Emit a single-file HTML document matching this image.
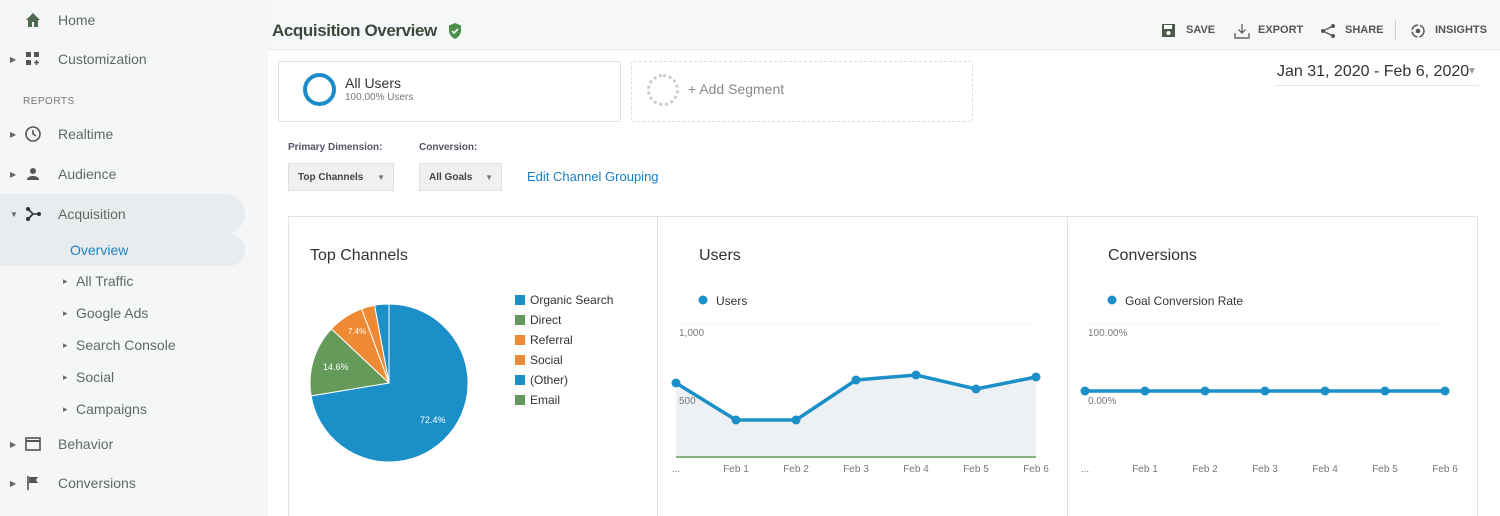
<!DOCTYPE html>
<html><head><meta charset="utf-8"><style>
*{margin:0;padding:0;box-sizing:border-box}
body{width:1500px;height:516px;overflow:hidden;background:#fff;font-family:"Liberation Sans",sans-serif;position:relative;color:#333}
.side{position:absolute;left:0;top:0;width:268px;height:516px;background:#f5f6f7}
.it{position:absolute;left:0;height:40px;display:flex;align-items:center;font-size:14px;color:#5f6b5f;width:245px}
.it .ar{position:absolute;left:10px;font-size:8px;color:#666}
.it .ic{position:absolute;left:24px;width:18px;height:18px}
.it .tx{position:absolute;left:58px}
.sub{position:absolute;left:76px;font-size:14px;color:#5f6b5f}
.sub:before{content:"▸";font-size:9px;position:absolute;left:-13px;top:3px;color:#666}
.abs{position:absolute}
.hdr{position:absolute;left:268px;top:0;width:1232px;height:50px;background:#f6f7f8;border-bottom:1px solid #e8eaeb}
.tb{position:absolute;top:24px;font-size:11px;font-weight:bold;color:#555}
.card{position:absolute;top:216px;height:300px;border:1px solid #e3e3e3;border-bottom:none}
.ttl{position:absolute;top:30px;font-size:16px;color:#333}
</style></head><body>
<div class="side">
 <div class="it" style="top:0"><svg class="ic" viewBox="0 0 18 18"><path d="M9 2L2 9h2v7h4v-5h2v5h4V9h2z" fill="#4f6b4f"/></svg><span class="tx">Home</span></div>
 <div class="it" style="top:39px"><span class="ar">▶</span><svg class="ic" viewBox="0 0 18 18"><rect x="2" y="2" width="5" height="5" fill="#555"/><rect x="10" y="2" width="5" height="5" fill="#555"/><rect x="2" y="10" width="5" height="5" fill="#555"/><path d="M12.5 10v5M10 12.5h5" stroke="#555" stroke-width="1.5"/></svg><span class="tx">Customization</span></div>
 <div class="abs" style="left:23px;top:96px;font-size:10px;color:#777;letter-spacing:.5px">REPORTS</div>
 <div class="it" style="top:114px"><span class="ar">▶</span><svg class="ic" viewBox="0 0 18 18"><circle cx="9" cy="9" r="7" fill="none" stroke="#555" stroke-width="1.6"/><path d="M9 5v4l3 2" fill="none" stroke="#555" stroke-width="1.6"/></svg><span class="tx">Realtime</span></div>
 <div class="it" style="top:154px"><span class="ar">▶</span><svg class="ic" viewBox="0 0 18 18"><circle cx="9" cy="6" r="3" fill="#555"/><path d="M3 15c0-3 3-4 6-4s6 1 6 4z" fill="#555"/></svg><span class="tx">Audience</span></div>
 <div class="abs" style="left:0;top:194px;width:245px;height:40px;background:#e9ecee;border-radius:0 20px 20px 0"></div>
 <div class="it" style="top:194px"><span class="ar">▼</span><svg class="ic" viewBox="0 0 18 18"><circle cx="4" cy="4" r="2" fill="#333"/><circle cx="4" cy="14" r="2" fill="#333"/><circle cx="15" cy="9" r="2" fill="#333"/><path d="M4 4l5 5h6M4 14l5-5" stroke="#333" stroke-width="1.6" fill="none"/></svg><span class="tx">Acquisition</span></div>
 <div class="abs" style="left:0;top:234px;width:245px;height:32px;background:#e9ecee;border-radius:0 16px 16px 0"></div>
 <div class="abs" style="left:70px;top:242px;font-size:14px;color:#1a84c7">Overview</div>
 <div class="sub" style="top:273px">All Traffic</div>
 <div class="sub" style="top:305px">Google Ads</div>
 <div class="sub" style="top:337px">Search Console</div>
 <div class="sub" style="top:369px">Social</div>
 <div class="sub" style="top:401px">Campaigns</div>
 <div class="it" style="top:424px"><span class="ar">▶</span><svg class="ic" viewBox="0 0 18 18"><rect x="2" y="3" width="14" height="12" fill="none" stroke="#555" stroke-width="1.6"/><path d="M2 6h14" stroke="#555" stroke-width="2"/></svg><span class="tx">Behavior</span></div>
 <div class="it" style="top:463px"><span class="ar">▶</span><svg class="ic" viewBox="0 0 18 18"><path d="M4 2v14" stroke="#555" stroke-width="1.6"/><path d="M5 3h9l-2 3 2 3H5z" fill="#555"/></svg><span class="tx">Conversions</span></div>
</div>
<div class="hdr">
 <div class="abs" style="left:4px;top:21px;font-size:17px;font-weight:bold;color:#3c4a3c;letter-spacing:-0.4px">Acquisition Overview</div>
 <svg class="abs" style="left:179px;top:22px" width="16" height="18" viewBox="0 0 16 18"><path d="M8 1l6 2.5v5c0 4-3 7-6 8.5C5 15.5 2 12.5 2 8.5v-5z" fill="#4a8f4a"/><path d="M5 9l2 2 4-4" stroke="#fff" stroke-width="1.6" fill="none"/></svg>
 <svg class="abs" style="left:893px;top:23px" width="15" height="15" viewBox="0 0 15 15"><rect x="1" y="1" width="13" height="13" fill="#4a5a4a"/><rect x="3" y="2" width="8" height="4" fill="#fff"/><circle cx="7.5" cy="10" r="2" fill="#fff"/></svg>
 <span class="tb" style="left:918px">SAVE</span>
 <svg class="abs" style="left:966px;top:23px" width="16" height="16" viewBox="0 0 16 16"><path d="M8 1v9M4.5 6.5L8 10l3.5-3.5M1 10v5h14v-5" stroke="#666" stroke-width="1.4" fill="none"/></svg>
 <span class="tb" style="left:990px">EXPORT</span>
 <svg class="abs" style="left:1052px;top:23px" width="16" height="16" viewBox="0 0 16 16"><circle cx="13" cy="3" r="2" fill="#555"/><circle cx="3" cy="8" r="2" fill="#555"/><circle cx="13" cy="13" r="2" fill="#555"/><path d="M13 3L3 8l10 5" stroke="#555" stroke-width="1.3" fill="none"/></svg>
 <span class="tb" style="left:1077px">SHARE</span>
 <div class="abs" style="left:1127px;top:20px;width:1px;height:20px;background:#ccc"></div>
 <svg class="abs" style="left:1142px;top:23px" width="16" height="16" viewBox="0 0 16 16"><circle cx="8" cy="8" r="6" fill="none" stroke="#555" stroke-width="1.5" stroke-dasharray="8 2"/><circle cx="8" cy="8" r="2.3" fill="#555"/></svg>
 <span class="tb" style="left:1167px">INSIGHTS</span>
</div>
<div class="abs" style="left:278px;top:61px;width:343px;height:61px;border:1px solid #e0e0e0;border-radius:3px"></div>
<div class="abs" style="left:303px;top:73px;width:33px;height:33px;border:4px solid #1b8cc9;border-radius:50%"></div>
<div class="abs" style="left:345px;top:75px;font-size:14px;color:#333">All Users</div>
<div class="abs" style="left:345px;top:92px;font-size:10px;color:#777">100.00% Users</div>
<div class="abs" style="left:631px;top:61px;width:342px;height:61px;border:1px dashed #ddd;border-radius:3px"></div>
<div class="abs" style="left:647px;top:74px;width:32px;height:32px;border:3px dotted #ccc;border-radius:50%"></div>
<div class="abs" style="left:688px;top:81px;font-size:14px;color:#888">+ Add Segment</div>
<div class="abs" style="left:1277px;top:63px;font-size:16px;color:#333">Jan 31, 2020 - Feb 6, 2020</div>
<div class="abs" style="left:1467px;top:66px;font-size:10px;color:#999">▼</div>
<div class="abs" style="left:1274px;top:85px;width:205px;height:1px;background:#e6e6e6"></div>
<div class="abs" style="left:288px;top:142px;font-size:10px;font-weight:bold;color:#556">Primary Dimension:</div>
<div class="abs" style="left:419px;top:142px;font-size:10px;font-weight:bold;color:#556">Conversion:</div>
<div class="abs" style="left:288px;top:163px;width:106px;height:28px;background:#eef0f2;border:1px solid #e0e0e0;font-size:10px;font-weight:bold;color:#444;padding:8px 9px">Top Channels<span style="position:absolute;right:8px;font-size:8px;color:#777;top:9px">▼</span></div>
<div class="abs" style="left:419px;top:163px;width:83px;height:28px;background:#eef0f2;border:1px solid #e0e0e0;font-size:10px;font-weight:bold;color:#444;padding:8px 9px">All Goals<span style="position:absolute;right:8px;font-size:8px;color:#777;top:9px">▼</span></div>
<div class="abs" style="left:527px;top:169px;font-size:13px;color:#1a7fc1">Edit Channel Grouping</div>

<div class="card" style="left:288px;width:370px"><div class="ttl" style="left:21px">Top Channels</div></div>
<div class="card" style="left:657px;width:411px"><div class="ttl" style="left:41px">Users</div></div>
<div class="card" style="left:1067px;width:411px"><div class="ttl" style="left:40px">Conversions</div></div>

<svg class="abs" style="left:0;top:0" width="1500" height="516">
 <path d="M389 383L389 304A79 79 0 1 1 311.1 395.9Z" fill="#1b8fc8" stroke="#fff"/>
 <path d="M389 383L311.1 395.9A79 79 0 0 1 331.4 328.9Z" fill="#649a5a" stroke="#fff"/>
 <path d="M389 383L331.4 328.9A79 79 0 0 1 361.7 308.9Z" fill="#ee8a34" stroke="#fff"/>
 <path d="M389 383L361.7 308.9A79 79 0 0 1 374.6 305.3Z" fill="#ee8a34" stroke="#fff"/>
 <path d="M389 383L374.6 305.3A79 79 0 0 1 389 304Z" fill="#1b8fc8" stroke="#fff"/>
 <text x="420" y="423" font-size="9" fill="#fff" font-family="Liberation Sans">72.4%</text>
 <text x="323" y="370" font-size="9" fill="#fff" font-family="Liberation Sans">14.6%</text>
 <text x="348" y="334" font-size="8" fill="#fff" font-family="Liberation Sans">7.4%</text>
 <g font-family="Liberation Sans" font-size="12" fill="#333">
  <rect x="515" y="295" width="10" height="10" fill="#1b8fc8"/><text x="530" y="304">Organic Search</text>
  <rect x="515" y="315" width="10" height="10" fill="#649a5a"/><text x="530" y="324">Direct</text>
  <rect x="515" y="335" width="10" height="10" fill="#ee8a34"/><text x="530" y="344">Referral</text>
  <rect x="515" y="355" width="10" height="10" fill="#ee8a34"/><text x="530" y="364">Social</text>
  <rect x="515" y="375" width="10" height="10" fill="#1b8fc8"/><text x="530" y="384">(Other)</text>
  <rect x="515" y="395" width="10" height="10" fill="#649a5a"/><text x="530" y="404">Email</text>
 </g>
 <circle cx="703" cy="300" r="4.5" fill="#1b8fc8"/>
 <text x="716" y="305" font-size="12" fill="#333" font-family="Liberation Sans">Users</text>
 <line x1="676" y1="324" x2="1036" y2="324" stroke="#eee" stroke-dasharray="2 2"/>
 <line x1="676" y1="392" x2="1036" y2="392" stroke="#eee" stroke-dasharray="2 2"/>
 <path d="M676 383L736 420L796 420L856 380L916 375L976 389L1036 377L1036 457L676 457Z" fill="#eef1f4"/>
 <line x1="676" y1="457" x2="1036" y2="457" stroke="#649a5a" stroke-width="1.5"/>
 <text x="679" y="336" font-size="10" fill="#777" font-family="Liberation Sans">1,000</text>
 <text x="679" y="404" font-size="10" fill="#777" font-family="Liberation Sans">500</text>
 <polyline points="676,383 736,420 796,420 856,380 916,375 976,389 1036,377" fill="none" stroke="#1b8fc8" stroke-width="3.5"/>
 <g fill="#1b8fc8"><circle cx="676" cy="383" r="4.5"/><circle cx="736" cy="420" r="4.5"/><circle cx="796" cy="420" r="4.5"/><circle cx="856" cy="380" r="4.5"/><circle cx="916" cy="375" r="4.5"/><circle cx="976" cy="389" r="4.5"/><circle cx="1036" cy="377" r="4.5"/></g>
 <g font-size="10" fill="#777" font-family="Liberation Sans" text-anchor="middle">
  <text x="676" y="472">...</text><text x="736" y="472">Feb 1</text><text x="796" y="472">Feb 2</text><text x="856" y="472">Feb 3</text><text x="916" y="472">Feb 4</text><text x="976" y="472">Feb 5</text><text x="1036" y="472">Feb 6</text>
  <text x="1085" y="472">...</text><text x="1145" y="472">Feb 1</text><text x="1205" y="472">Feb 2</text><text x="1265" y="472">Feb 3</text><text x="1325" y="472">Feb 4</text><text x="1385" y="472">Feb 5</text><text x="1445" y="472">Feb 6</text>
 </g>
 <circle cx="1112" cy="300" r="4.5" fill="#1b8fc8"/>
 <text x="1125" y="305" font-size="12" fill="#333" font-family="Liberation Sans">Goal Conversion Rate</text>
 <line x1="1085" y1="324" x2="1445" y2="324" stroke="#eee" stroke-dasharray="2 2"/>
 <text x="1088" y="336" font-size="10" fill="#777" font-family="Liberation Sans">100.00%</text>
 <text x="1088" y="404" font-size="10" fill="#777" font-family="Liberation Sans">0.00%</text>
 <line x1="1085" y1="391" x2="1445" y2="391" stroke="#1b8fc8" stroke-width="3.5"/>
 <g fill="#1b8fc8"><circle cx="1085" cy="391" r="4.5"/><circle cx="1145" cy="391" r="4.5"/><circle cx="1205" cy="391" r="4.5"/><circle cx="1265" cy="391" r="4.5"/><circle cx="1325" cy="391" r="4.5"/><circle cx="1385" cy="391" r="4.5"/><circle cx="1445" cy="391" r="4.5"/></g>
</svg>
</body></html>
